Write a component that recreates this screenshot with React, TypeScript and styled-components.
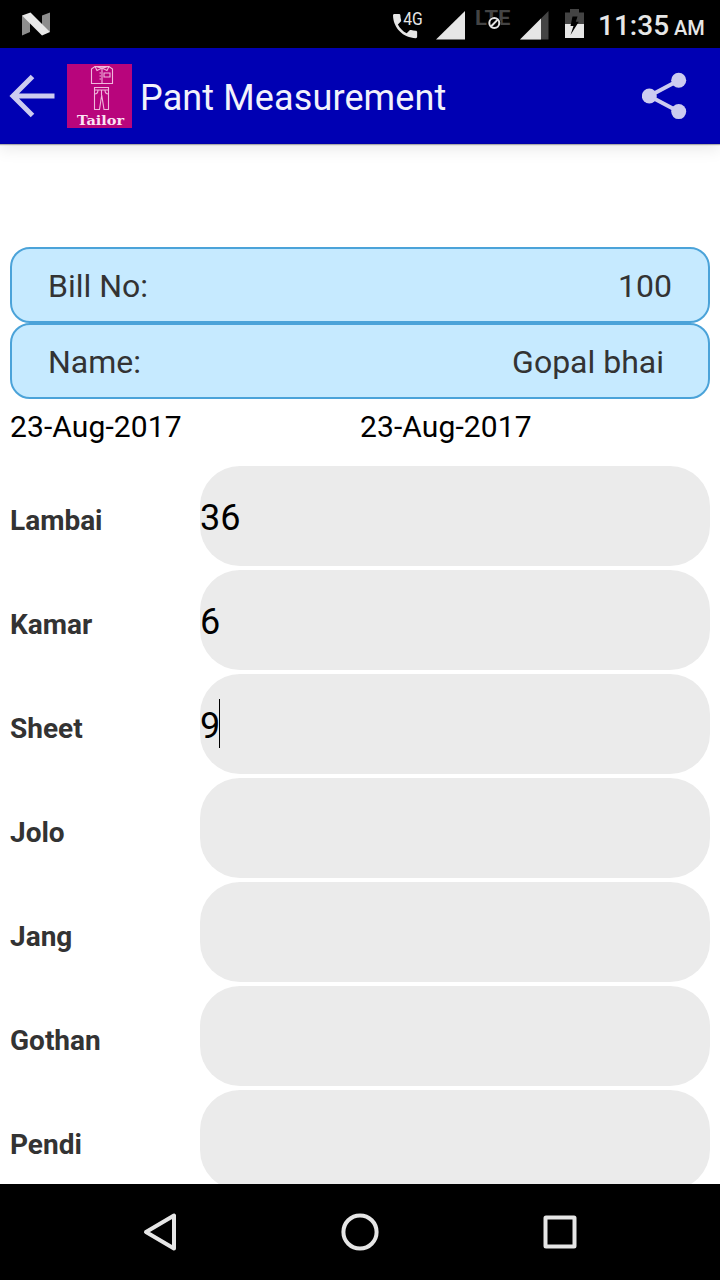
import React from 'react';
import styled, { createGlobalStyle } from 'styled-components';

const GlobalStyle = createGlobalStyle`
  * { box-sizing: border-box; }
  body { margin: 0; background: #fff; font-family: Roboto, "Liberation Sans", sans-serif; }
  svg { display: block; flex: none; }
`;

const Screen = styled.div`
  display: flex;
  flex-direction: column;
  width: 720px;
  height: 1280px;
  overflow: hidden;
  background: #fff;
`;

const StatusBar = styled.div`
  display: flex;
  align-items: flex-start;
  height: 48px;
  flex: none;
  padding: 0 16px 0 20px;
  background: #000;
`;

const StatusIcons = styled.div`
  display: flex;
  margin-left: auto;
`;

const Clock = styled.div`
  width: 106px;
  margin-left: 14px;
  color: #e6e6e6;
  font-size: 28px;
  font-weight: 500;
  line-height: 52px;
  white-space: nowrap;
`;

const Meridiem = styled.span`
  margin-left: 5px;
  font-size: 20px;
`;

const AppBar = styled.header`
  display: flex;
  align-items: center;
  height: 96px;
  flex: none;
  padding: 0 32px 0 8px;
  background: #0000b3;
  border-bottom: 1px solid #0000a8;
  box-shadow: 0 1px 1px rgba(0, 0, 0, 0.28), 0 4px 16px rgba(0, 0, 0, 0.1);
`;

const Title = styled.h1`
  flex: 1;
  margin: 5px 0 0 8px;
  color: #f2f2fb;
  font-size: 36px;
  font-weight: 400;
  line-height: 42px;
  letter-spacing: 0.12px;
`;

const LogoSlot = styled.div`
  margin-left: 10px;
`;

const Content = styled.main`
  flex: 1;
  min-height: 0;
  overflow: hidden;
  padding: 103px 10px 0;
`;

const InfoRow = styled.div<{ $end: number }>`
  display: flex;
  align-items: center;
  justify-content: space-between;
  height: 76px;
  padding: 2px ${p => p.$end}px 0 36px;
  border: 2px solid #4ba3d9;
  border-radius: 20px;
  background: #c6eaff;
  color: #333;
  font-size: 32px;
`;

const Dates = styled.div`
  display: grid;
  grid-template-columns: 1fr 1fr;
  height: 67px;
  padding-top: 10px;
  color: #000;
  font-size: 30px;
  line-height: 35px;
  letter-spacing: 0.1px;
`;

const MeasureRow = styled.label`
  display: grid;
  grid-template-columns: 190px 1fr;
  align-items: center;
  height: 100px;
  margin-bottom: 4px;
`;

const MeasureName = styled.span`
  padding-top: 9px;
  color: #333;
  font-size: 28px;
  font-weight: 700;
`;

const Field = styled.span`
  display: flex;
  align-items: center;
  height: 100px;
  padding-bottom: 1px;
  border-radius: 40px;
  background: #ebebeb;
  color: #000;
  font-size: 36px;
  line-height: 42px;
`;

const Value = styled.span`
  padding-top: 5px;
`;

const Caret = styled.span`
  width: 1px;
  height: 49px;
  margin-left: -1px;
  background: #000;
`;

const NavBar = styled.nav`
  display: flex;
  align-items: center;
  justify-content: center;
  gap: 160px;
  height: 96px;
  flex: none;
  background: #000;
`;

const NougatIcon = () => (
  <svg width="32" height="48" viewBox="20 0 32 48">
    <path d="M22 15.500L30 20V32L22 35.500ZM42 15.500L50 12.500V32L42 28Z" fill="#8d8d8d" />
    <path d="M22 15.500L30.500 12.500L50 32L42 35.500Z" fill="#e8e8e8" />
  </svg>
);

const CallIcon = () => (
  <svg width="34" height="48" viewBox="392 0 34 48">
    <path
      transform="translate(390 10) scale(1.34)"
      d="M6.620 10.790c1.440 2.830 3.760 5.140 6.590 6.590l2.200-2.200c.27-.27.67-.36 1.020-.24 1.120.37 2.330.57 3.570.57.550 0 1 .45 1 1V20c0 .55-.45 1-1 1-9.390 0-17-7.610-17-17 0-.55.450-1 1-1h3.500c.55 0 1 .45 1 1 0 1.250.2 2.450.57 3.570.110.350.030.740-.25 1.020z"
      fill="#e6e6e6"
    />
    <text x="404.300" y="24.500" fontFamily="Roboto" fontSize="18" textLength="19.500" lengthAdjust="spacingAndGlyphs" fill="#e6e6e6">4G</text>
  </svg>
);

const SignalFull = () => (
  <svg width="50" height="48" viewBox="425 0 50 48">
    <path d="M436 39.500L465 11V39.500Z" fill="#e6e6e6" />
  </svg>
);

const LteIcon = () => (
  <svg width="42" height="48" viewBox="475 0 42 48">
    <text x="475" y="25" fontFamily="Roboto" fontSize="21" fontWeight="700" textLength="35.500" lengthAdjust="spacingAndGlyphs" fill="#444">LTE</text>
    <circle cx="494.300" cy="23" r="6.500" fill="#000" />
    <circle cx="494.300" cy="23" r="5" fill="none" stroke="#e6e6e6" strokeWidth="2" />
    <path d="M491 26.500L497.700 19.600" stroke="#e6e6e6" strokeWidth="2" />
  </svg>
);

const SignalPartial = () => (
  <svg width="35" height="48" viewBox="517 0 35 48">
    <path d="M520 39.500L548.500 11V39.500Z" fill="#444" />
    <path d="M520 39.500L541 18.500V39.500Z" fill="#e6e6e6" />
  </svg>
);

const BatteryIcon = () => (
  <svg width="32" height="48" viewBox="552 0 32 48">
    <path d="M565 12.500H570V9H579V12.500H584V24H565Z" fill="#444" />
    <path d="M565 24H584V38H565Z" fill="#e6e6e6" />
    <path d="M572.500 16.500H577.500L575.800 21.800H578.800L570.500 35L573.500 26H570.500Z" fill="#000" />
  </svg>
);

const BackArrow = () => (
  <svg width="49" height="48" viewBox="8 72 49 48">
    <path d="M54.500 96H14M32.500 76.500L13 96L32.500 115.500" fill="none" stroke="#cccbf0" strokeWidth="5" />
  </svg>
);

const TailorLogo = () => (
  <svg width="65" height="64" viewBox="0 0 65 64">
    <path d="M0 0H65V64H0Z" fill="#b8057c" />
    <g fill="none" stroke="#f0b8dc" strokeWidth="1.100">
      <path d="M28 2.500L24.500 5V19.500H45.500V5L42 2.500H29Z" />
      <path d="M28 2.500L30 6.500L35 4L40 6.500L42 2.500M35 4V19.500M29 2.500Q35 5 41 2.500M37 9H43V13H37ZM32.500 9H34M32.500 12H34M32.500 15H34" />
      <path d="M27.500 23.500H41.500V26H27.500ZM27.500 26V45.500H32.500L34.700 31L37 45.500H41.500V26M34.500 26V31M27.500 30Q31 30 31 26M41.500 30Q38 30 38 26" />
    </g>
    <text x="10" y="60.500" fontFamily="'DejaVu Serif', 'Liberation Serif', serif" fontWeight="700" fontSize="13" textLength="47" lengthAdjust="spacingAndGlyphs" fill="#fbe3f3">Tailor</text>
  </svg>
);

const ShareIcon = () => (
  <svg width="46" height="48" viewBox="642 72 46 48">
    <path d="M678.500 80.500L649.300 96L678.500 111.500" fill="none" stroke="#cccbf0" strokeWidth="4" />
    <g fill="#cccbf0">
      <circle cx="678.700" cy="80.300" r="7.500" />
      <circle cx="649.300" cy="96" r="7.500" />
      <circle cx="678.700" cy="111.600" r="7.500" />
    </g>
  </svg>
);

const NavBack = () => (
  <svg width="40" height="40" viewBox="140 1212 40 40">
    <path d="M174 1215.500V1248.500L146 1232Z" fill="none" stroke="#e6e6e6" strokeWidth="4" strokeLinejoin="round" />
  </svg>
);

const NavHome = () => (
  <svg width="40" height="40" viewBox="340 1212 40 40">
    <circle cx="360" cy="1232" r="16.600" fill="none" stroke="#e6e6e6" strokeWidth="4" />
  </svg>
);

const NavRecents = () => (
  <svg width="40" height="40" viewBox="540 1212 40 40">
    <rect x="545.500" y="1217.500" width="29" height="29" rx="0.500" fill="none" stroke="#e6e6e6" strokeWidth="4" strokeLinejoin="round" />
  </svg>
);

const measurements = [
  { name: 'Lambai', value: '36' },
  { name: 'Kamar', value: '6' },
  { name: 'Sheet', value: '9', focused: true },
  { name: 'Jolo', value: '' },
  { name: 'Jang', value: '' },
  { name: 'Gothan', value: '' },
  { name: 'Pendi', value: '' },
];

export default function App() {
  return (
    <>
      <GlobalStyle />
      <Screen>
        <StatusBar>
          <NougatIcon />
          <StatusIcons>
            <CallIcon />
            <SignalFull />
            <LteIcon />
            <SignalPartial />
            <BatteryIcon />
          </StatusIcons>
          <Clock>11:35<Meridiem>AM</Meridiem></Clock>
        </StatusBar>
        <AppBar>
          <BackArrow />
          <LogoSlot><TailorLogo /></LogoSlot>
          <Title>Pant Measurement</Title>
          <ShareIcon />
        </AppBar>
        <Content>
          <InfoRow $end={36}><span>Bill No:</span><span>100</span></InfoRow>
          <InfoRow $end={44}><span>Name:</span><span>Gopal bhai</span></InfoRow>
          <Dates><span>23-Aug-2017</span><span>23-Aug-2017</span></Dates>
          {measurements.map(m => (
            <MeasureRow key={m.name}>
              <MeasureName>{m.name}</MeasureName>
              <Field>
                <Value>{m.value}</Value>
                {m.focused && <Caret />}
              </Field>
            </MeasureRow>
          ))}
        </Content>
        <NavBar>
          <NavBack />
          <NavHome />
          <NavRecents />
        </NavBar>
      </Screen>
    </>
  );
}
